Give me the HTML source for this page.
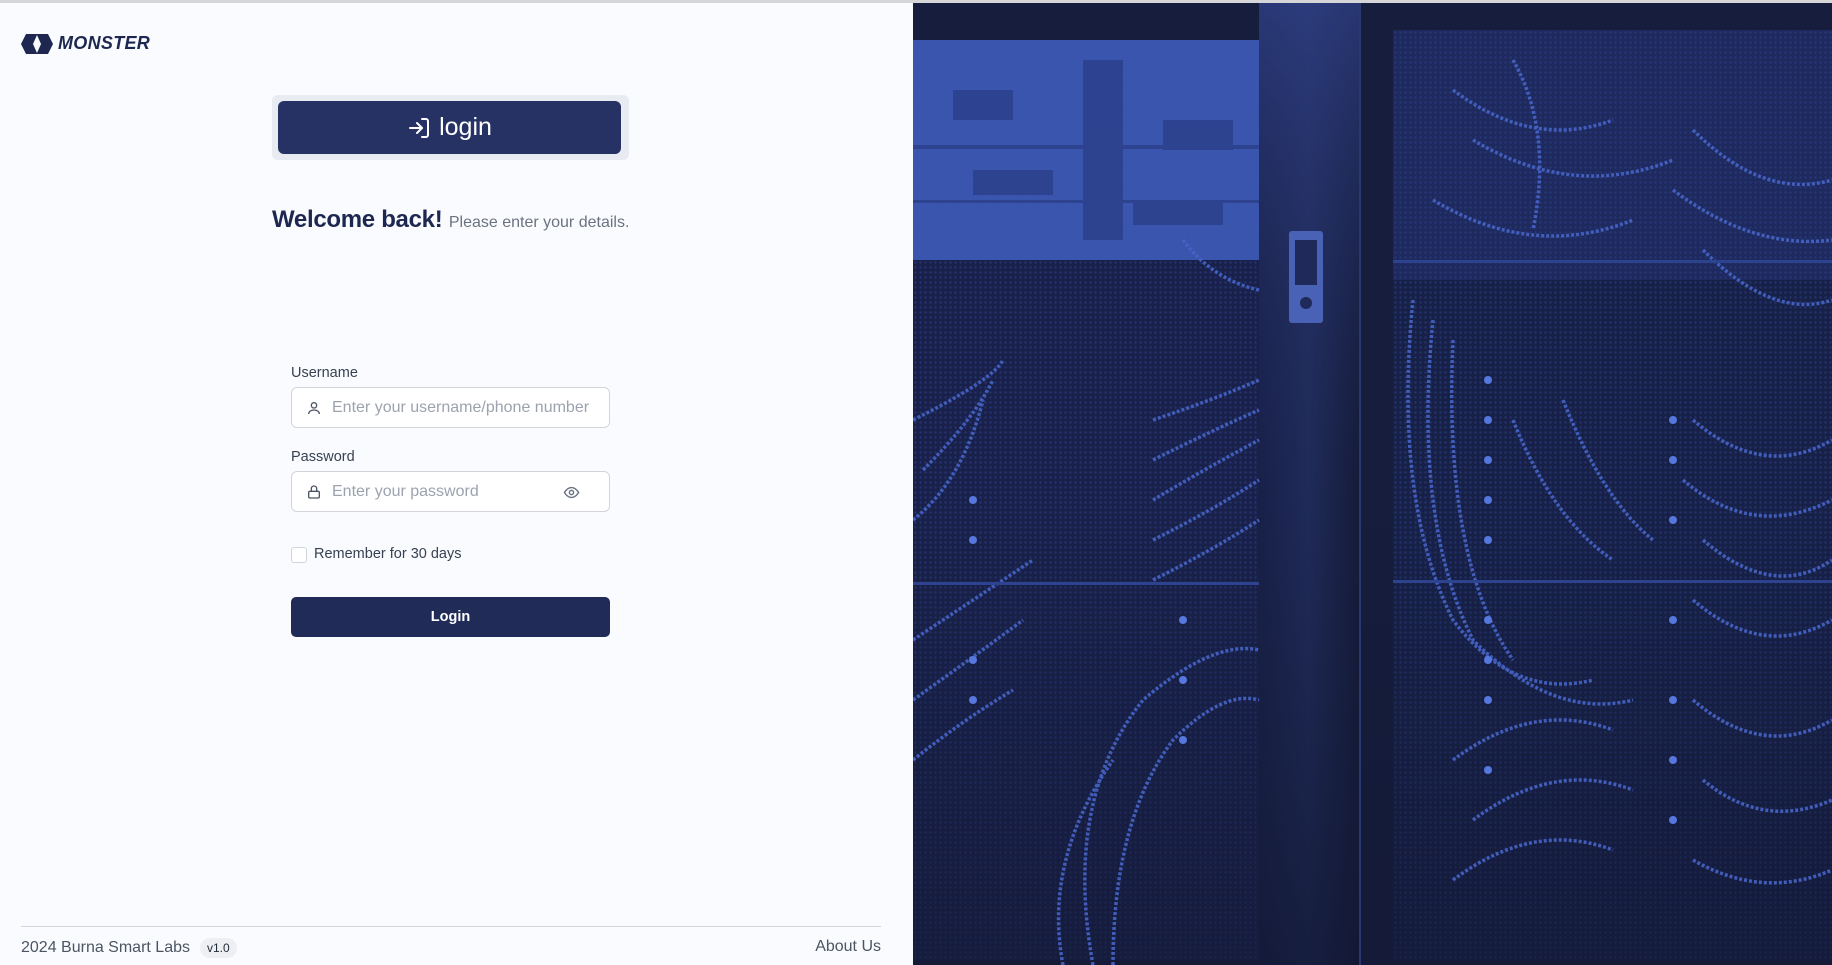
<!DOCTYPE html>
<html><head><meta charset="utf-8">
<style>
*{margin:0;padding:0;box-sizing:border-box}
body{width:1832px;height:965px;overflow:hidden;background:#fafbfe;font-family:"Liberation Sans",sans-serif;position:relative}
.topline{position:absolute;left:0;top:0;width:1832px;height:3px;background:#d6d6d8}
.right{position:absolute;left:913px;top:3px;width:919px;height:962px;background:#161d3d;overflow:hidden}
.logo{position:absolute;left:21px;top:33px;display:flex;align-items:center}
.logo span{font-weight:bold;font-style:italic;font-size:18px;color:#1d2750;letter-spacing:0.3px;margin-left:5px}
.tab{position:absolute;left:272px;top:95px;width:357px;height:65px;background:#e9ebf3;border-radius:6px}
.tabbtn{position:absolute;left:6px;top:6px;width:343px;height:53px;background:#263264;border-radius:6px;color:#fff;font-size:25px;display:flex;align-items:center;justify-content:center}
.tabbtn svg{margin-right:8px}
.welcome{position:absolute;left:272px;top:206px;white-space:nowrap}
.welcome b{font-size:24px;color:#1d2750;letter-spacing:-0.3px}
.welcome span{font-size:16px;color:#6b7280;margin-left:2px}
.label{position:absolute;left:291px;font-size:14.5px;color:#374151}
.input{position:absolute;left:291px;width:319px;height:41px;border:1px solid #d1d5db;border-radius:6px;background:#fff;display:flex;align-items:center;padding-left:14px}
.input .ph{font-size:16px;color:#9ca3af;margin-left:10px}
.cb{position:absolute;left:291px;top:547px;width:16px;height:16px;border:1px solid #d1d5db;border-radius:3px;background:#fff}
.cbl{position:absolute;left:314px;top:546px;font-size:14.5px;color:#374151}
.login{position:absolute;left:291px;top:597px;width:319px;height:40px;background:#212b58;border-radius:5px;color:#fff;font-size:14.5px;font-weight:bold;display:flex;align-items:center;justify-content:center}
.fline{position:absolute;left:21px;top:926px;width:860px;height:1px;background:#d6d6d8}
.foot{position:absolute;left:21px;top:938px;font-size:16px;color:#4b5563;display:flex;align-items:center}
.ver{margin-left:10px;background:#eeeff2;border-radius:10px;font-size:12px;padding:3px 7px;color:#1f2937}
.about{position:absolute;right:951px;top:938px;font-size:16px;color:#4b5563}
</style></head><body>
<div class="topline"></div>
<div class="logo">
<svg width="32" height="20" viewBox="0 0 32 20"><path d="M5 0h22l5 10-5 10H5L0 10z" fill="#1d2750"/><path d="M16 1l4 9-4 9-4-9z" fill="#fafbfe"/></svg>
<span>MONSTER</span></div>
<div class="tab"><div class="tabbtn">
<svg width="24" height="24" viewBox="0 0 24 24" fill="none" stroke="#fff" stroke-width="2" stroke-linecap="round" stroke-linejoin="round"><path d="M15 3h4a2 2 0 0 1 2 2v14a2 2 0 0 1-2 2h-4"/><path d="M10 17l5-5-5-5"/><path d="M15 12H3"/></svg>login</div></div>
<div class="welcome"><b>Welcome back!</b><span> Please enter your details.</span></div>
<div class="label" style="top:365px">Username</div>
<div class="input" style="top:387px">
<svg width="16" height="16" viewBox="0 0 24 24" fill="none" stroke="#4b5563" stroke-width="2"><circle cx="12" cy="8" r="4"/><path d="M4 21c0-4 4-6 8-6s8 2 8 6"/></svg>
<span class="ph">Enter your username/phone number</span></div>
<div class="label" style="top:449px">Password</div>
<div class="input" style="top:471px">
<svg width="16" height="16" viewBox="0 0 24 24" fill="none" stroke="#4b5563" stroke-width="2"><rect x="4" y="11" width="16" height="10" rx="2"/><path d="M8 11V7a4 4 0 0 1 8 0v4"/></svg>
<span class="ph">Enter your password</span>
<svg style="position:absolute;left:271px;top:12px" width="17" height="17" viewBox="0 0 24 24" fill="none" stroke="#6b7280" stroke-width="2"><path d="M2 12s4-7 10-7 10 7 10 7-4 7-10 7S2 12 2 12z"/><circle cx="12" cy="12" r="3"/></svg>
</div>
<div class="cb"></div><div class="cbl">Remember for 30 days</div>
<div class="login">Login</div>
<div class="fline"></div>
<div class="foot">2024 Burna Smart Labs <span class="ver">v1.0</span></div>
<div class="about">About Us</div>
<div class="right">
<svg width="919" height="962" viewBox="0 3 919 962">
<defs>
<linearGradient id="door" x1="0" x2="1"><stop offset="0" stop-color="#1a2350"/><stop offset="0.5" stop-color="#26346c"/><stop offset="1" stop-color="#141a38"/></linearGradient>
<linearGradient id="doorv" x1="0" y1="0" x2="0" y2="1"><stop offset="0" stop-color="#2d3d80" stop-opacity="0.8"/><stop offset="0.5" stop-color="#161d3d" stop-opacity="0.4"/><stop offset="1" stop-color="#121833" stop-opacity="0.8"/></linearGradient>
<linearGradient id="fade" x1="0" y1="0" x2="0" y2="1"><stop offset="0" stop-color="#121833" stop-opacity="0"/><stop offset="1" stop-color="#121833" stop-opacity="0.6"/></linearGradient>
<pattern id="mesh" width="5" height="5" patternUnits="userSpaceOnUse"><circle cx="2.5" cy="2.5" r="1.2" fill="#3b55b0" opacity="0.35"/></pattern>
</defs>
<rect width="919" height="965" fill="#161d3d"/>
<rect x="0" y="40" width="346" height="220" fill="#3a55ad"/>
<rect x="0" y="40" width="346" height="220" fill="url(#mesh)"/>
<g fill="#23357a" opacity="0.55">
<rect x="40" y="90" width="60" height="30"/><rect x="60" y="170" width="80" height="25"/><rect x="170" y="60" width="40" height="180"/><rect x="250" y="120" width="70" height="30"/><rect x="220" y="200" width="90" height="25"/><rect x="0" y="145" width="346" height="4"/><rect x="0" y="200" width="346" height="3"/>
</g>
<rect x="0" y="260" width="346" height="700" fill="#19214a"/>
<rect x="0" y="260" width="346" height="700" fill="url(#mesh)"/>
<rect x="480" y="30" width="439" height="930" fill="#172047"/>
<rect x="480" y="30" width="439" height="930" fill="url(#mesh)"/>
<rect x="480" y="30" width="439" height="250" fill="#2a3d8a" opacity="0.35"/>
<rect x="0" y="500" width="919" height="465" fill="url(#fade)"/>
<rect x="346" y="0" width="100" height="965" fill="url(#door)"/>
<rect x="346" y="0" width="100" height="965" fill="url(#doorv)"/>
<rect x="446" y="0" width="2" height="965" fill="#2b3870"/>
<rect x="376" y="231" width="34" height="92" rx="3" fill="#4a62b5"/>
<rect x="382" y="240" width="22" height="45" fill="#1f2a5a"/>
<circle cx="393" cy="303" r="6" fill="#1f2a5a"/>
<g fill="none" stroke="#4664c8" stroke-width="3.5" stroke-dasharray="3 2" opacity="0.9">
<path d="M0 420 Q80 380 90 360 M10 470 Q60 420 80 380 M0 520 Q50 480 70 400"/>
<path d="M240 420 Q300 400 346 380 M240 460 Q300 430 346 410 M240 500 Q290 470 346 440 M240 540 Q300 510 346 480 M240 580 Q300 550 346 520"/>
<path d="M180 965 Q150 800 230 700 Q300 640 346 650 M200 965 Q200 820 260 740 Q310 690 346 700 M150 965 Q130 860 200 760"/>
<path d="M0 640 Q60 600 120 560 M0 700 Q70 650 110 620 M0 760 Q50 720 100 690"/>
<path d="M270 240 Q300 280 346 290"/>
<path d="M500 300 Q480 500 540 620 Q600 700 680 680 M520 320 Q500 520 560 640 Q640 720 720 700 M540 340 Q530 560 600 660"/>
<path d="M540 90 Q620 150 700 120 M560 140 Q660 200 760 160 M520 200 Q620 260 720 220 M600 60 Q640 130 620 230"/>
<path d="M780 130 Q850 200 919 180 M760 190 Q840 250 919 240 M790 250 Q860 320 919 300"/>
<path d="M780 420 Q850 480 919 440 M770 480 Q840 540 919 500 M790 540 Q860 600 919 560 M780 600 Q850 660 919 620"/>
<path d="M540 760 Q620 700 700 730 M560 820 Q640 760 720 790 M540 880 Q620 820 700 850"/>
<path d="M780 700 Q850 760 919 720 M790 780 Q850 830 919 800 M780 860 Q850 900 919 870"/>
<path d="M600 420 Q640 520 700 560 M650 400 Q690 500 740 540"/>
</g>
<g fill="#5677dd">
<circle cx="575" cy="380" r="4"/><circle cx="575" cy="420" r="4"/><circle cx="575" cy="460" r="4"/><circle cx="575" cy="500" r="4"/><circle cx="575" cy="540" r="4"/><circle cx="575" cy="620" r="4"/><circle cx="575" cy="660" r="4"/><circle cx="575" cy="700" r="4"/><circle cx="575" cy="770" r="4"/>
<circle cx="760" cy="420" r="4"/><circle cx="760" cy="460" r="4"/><circle cx="760" cy="520" r="4"/><circle cx="760" cy="620" r="4"/><circle cx="760" cy="700" r="4"/><circle cx="760" cy="760" r="4"/><circle cx="760" cy="820" r="4"/>
<circle cx="60" cy="500" r="4"/><circle cx="60" cy="540" r="4"/><circle cx="60" cy="660" r="4"/><circle cx="60" cy="700" r="4"/><circle cx="270" cy="620" r="4"/><circle cx="270" cy="680" r="4"/><circle cx="270" cy="740" r="4"/>
</g>
<rect x="0" y="582" width="346" height="3" fill="#2e4390"/>
<rect x="480" y="260" width="439" height="3" fill="#2e4390"/>
<rect x="480" y="580" width="439" height="3" fill="#2e4390"/>
</svg>
</div>
</body></html>
